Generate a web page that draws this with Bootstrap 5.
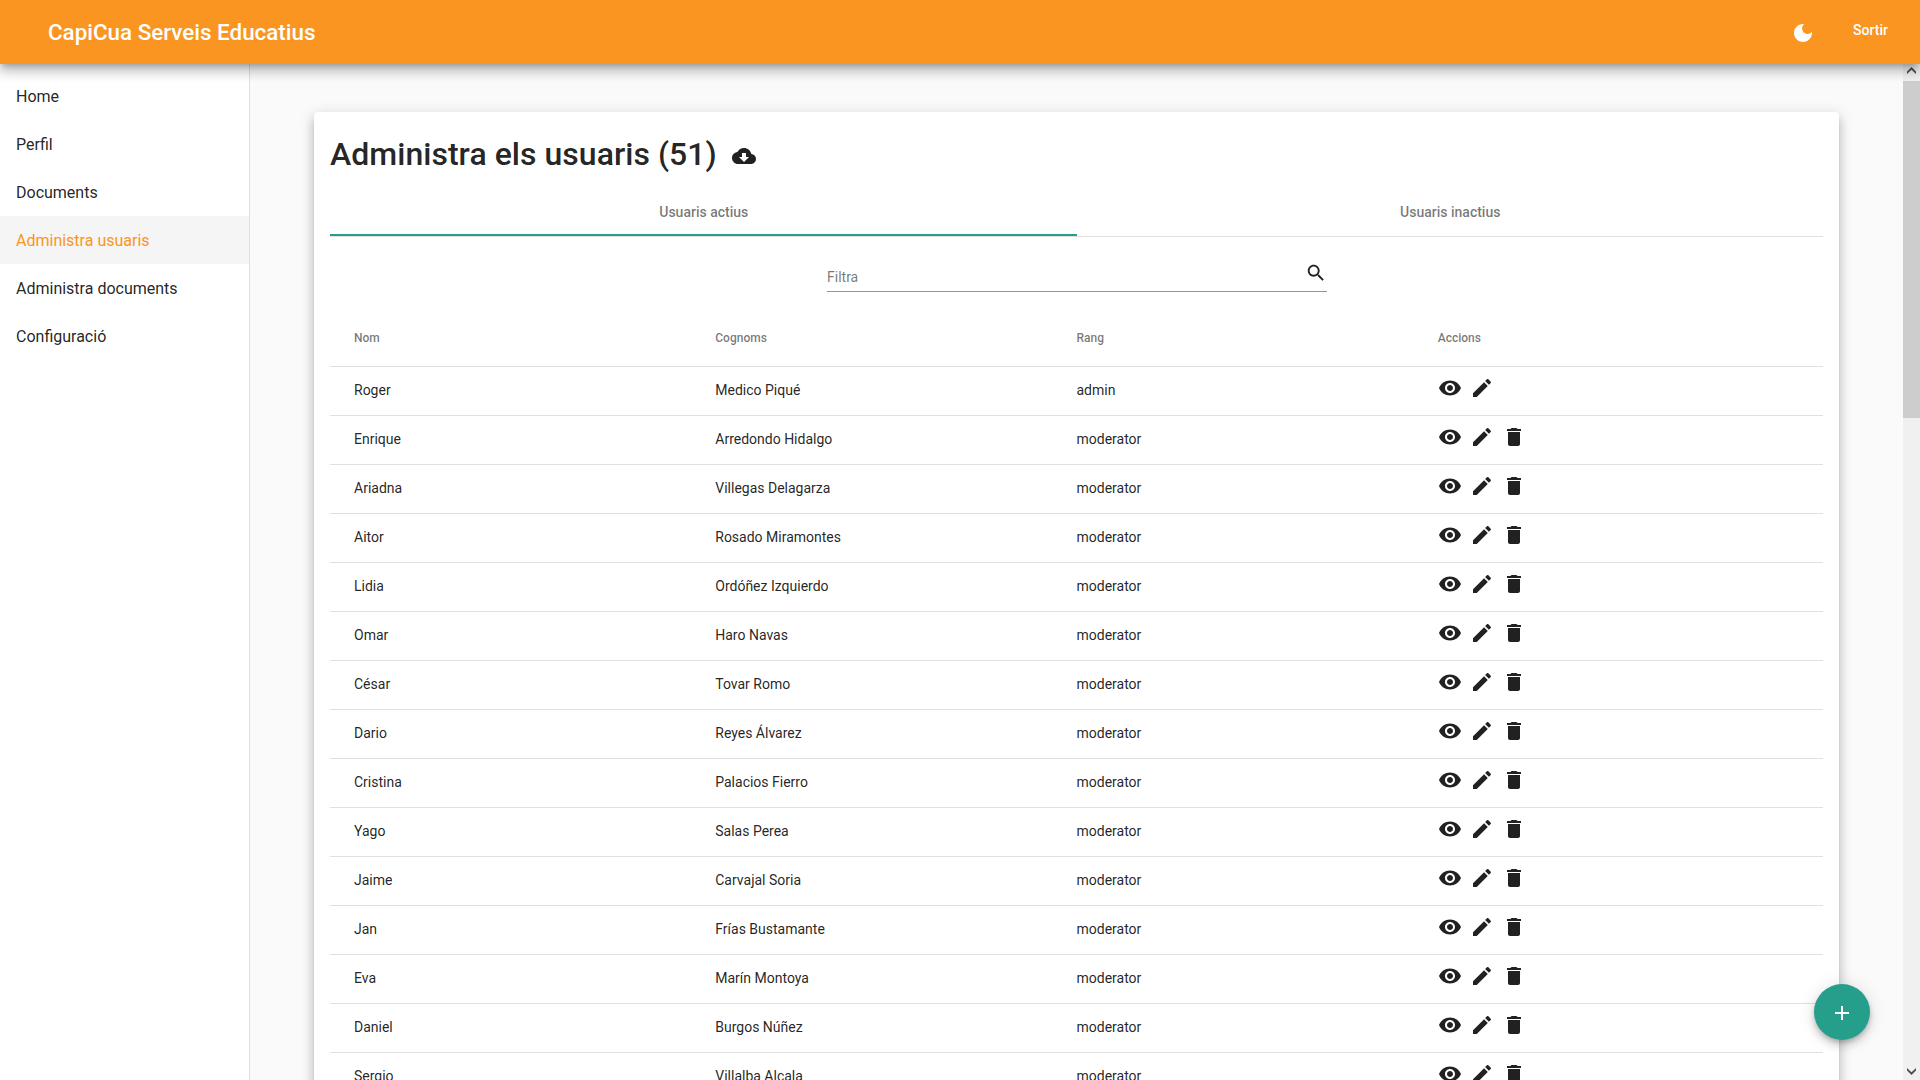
<!DOCTYPE html>
<html lang="ca">
<head>
<meta charset="utf-8">
<meta name="viewport" content="width=device-width, initial-scale=1">
<title>CapiCua Serveis Educatius</title>
<link href="https://cdn.jsdelivr.net/npm/bootstrap@5.3.0/dist/css/bootstrap.min.css" rel="stylesheet">
<style>
  body { font-family: Roboto, "Noto Sans", sans-serif; font-size: 14px; color: rgba(0,0,0,.87); background: #fafafa; }
  a { color: inherit; text-decoration: none; }
  svg { fill: currentColor; display: block; flex: none; }
  .topbar, .panel { box-shadow: 0 5px 5px -3px rgba(0,0,0,.2), 0 8px 10px 1px rgba(0,0,0,.14), 0 3px 14px 2px rgba(0,0,0,.12); }
  .topbar { height: 64px; padding: 2px 32px 0 48px; background: #fa9521; z-index: 10; }
  .brand { font-size: 22.4px; line-height: 32px; font-weight: 500; margin-bottom: 2px; }
  .logout { font-weight: 500; line-height: 36px; margin: 0 0 6px 38.500px; }
  .sidebar { width: 250px; padding-top: 8px; border-right: 1px solid rgba(0,0,0,.12); }
  .sidebar a { height: 48px; font-size: 16px; padding-top: 2px; }
  .sidebar a.active { background: #f5f5f5; color: #fa9521; }
  .content-area { padding: 48px 64px 0; }
  .panel { height: 1200px; padding: 16px; border-radius: 4px; }
  .panel h1 { font-size: 32px; line-height: 52px; font-weight: 500; letter-spacing: .03px; margin: 0 15px 0 0; }
  .export-icon { margin-top: 3px; }
  .tabs { margin-top: 8px; border-bottom: 1px solid rgba(0,0,0,.12); }
  .tabs a { height: 48px; padding: 2px 0 0 1px; font-weight: 500; color: rgba(0,0,0,.54); border-bottom: 2px solid transparent; }
  .tabs a.active { border-color: #259f8c; }
  .filter { width: 500px; height: 55px; border-bottom: 1px solid rgba(0,0,0,.42); }
  .filter input { font-size: 14px; line-height: 18px; border: 0; outline: 0; padding: 0 0 0 .5px; margin-top: 31px; background: none; }
  .filter input::placeholder { color: rgba(0,0,0,.54); opacity: 1; }
  .filter svg { margin-top: 24.500px; }
  .line { height: 49px; padding-bottom: 2px; border-bottom: 1px solid rgba(0,0,0,.12); }
  .line-head { height: 56px; margin-top: 19px; font-size: 12px; font-weight: 500; color: rgba(0,0,0,.54); }
  .fab { right: 50px; bottom: 40px; width: 56px; height: 56px; padding-top: 2px; background: #259f8c; z-index: 5;
    box-shadow: 0 3px 5px -1px rgba(0,0,0,.2), 0 6px 10px 0 rgba(0,0,0,.14), 0 1px 18px 0 rgba(0,0,0,.12); }
  .scroll-track { width: 17px; background: #f0f0f0; }
  .scroll-thumb { height: 337px; background: #cdcdcd; }
  .scroll-arrow { height: 17px; color: #505050; }
</style>
<script src="https://cdn.jsdelivr.net/npm/bootstrap@5.3.0/dist/js/bootstrap.bundle.min.js"></script>
</head>
<body class="vh-100 overflow-hidden d-flex flex-column">
<svg width="0" height="0" class="position-absolute">
  <symbol id="eye" viewBox="0 0 24 24"><path d="M12 4.500C7 4.500 2.730 7.610 1 12c1.730 4.390 6 7.500 11 7.500s9.270-3.110 11-7.500c-1.730-4.390-6-7.500-11-7.500zM12 17c-2.760 0-5-2.240-5-5s2.240-5 5-5 5 2.240 5 5-2.240 5-5 5zm0-8c-1.660 0-3 1.340-3 3s1.340 3 3 3 3-1.340 3-3-1.340-3-3-3z"/></symbol>
  <symbol id="pencil" viewBox="0 0 24 24"><path d="M3 17.250V21h3.750L17.810 9.940l-3.750-3.750L3 17.250zM20.710 7.040c.390-.390.390-1.020 0-1.410l-2.340-2.340c-.390-.390-1.020-.390-1.410 0l-1.830 1.830 3.750 3.750 1.830-1.830z"/></symbol>
  <symbol id="trash" viewBox="0 0 24 24"><path d="M6 19c0 1.100.900 2 2 2h8c1.100 0 2-.900 2-2V7H6v12zM19 4h-3.500l-1-1h-5l-1 1H5v2h14V4z"/></symbol>
</svg>

<header class="topbar position-relative d-flex align-items-center flex-shrink-0 text-white">
  <span class="brand me-auto">CapiCua Serveis Educatius</span>
  <svg width="24" height="24" viewBox="0 0 24 24"><path d="M12 3c-4.970 0-9 4.030-9 9s4.030 9 9 9 9-4.030 9-9c0-.460-.040-.920-.100-1.360-.980 1.370-2.580 2.260-4.400 2.260-2.980 0-5.400-2.420-5.400-5.400 0-1.810.890-3.420 2.260-4.400-.440-.060-.900-.100-1.360-.100z"/></svg>
  <a class="logout" href="#">Sortir</a>
</header>

<div class="d-flex flex-grow-1 overflow-hidden">
  <nav class="sidebar flex-shrink-0 bg-white">
    <a class="d-flex align-items-center px-3" href="#">Home</a>
    <a class="d-flex align-items-center px-3" href="#">Perfil</a>
    <a class="d-flex align-items-center px-3" href="#">Documents</a>
    <a class="d-flex align-items-center px-3 active" href="#">Administra usuaris</a>
    <a class="d-flex align-items-center px-3" href="#">Administra documents</a>
    <a class="d-flex align-items-center px-3" href="#">Configuració</a>
  </nav>

  <main class="content-area flex-grow-1 overflow-hidden">
    <section class="panel bg-white">
      <div class="d-flex align-items-center">
        <h1>Administra els usuaris (51)</h1>
        <svg class="export-icon" width="24" height="24" viewBox="0 0 24 24"><path d="M19.350 10.040C18.670 6.590 15.640 4 12 4 9.110 4 6.600 5.640 5.350 8.040 2.340 8.360 0 10.910 0 14c0 3.310 2.690 6 6 6h13c2.760 0 5-2.240 5-5 0-2.640-2.050-4.780-4.650-4.960zM17 13l-5 5-5-5h3V9h4v4h3z"/></svg>
      </div>
      <div class="tabs d-flex">
        <a class="w-50 d-flex align-items-center justify-content-center active" href="#">Usuaris actius</a>
        <a class="w-50 d-flex align-items-center justify-content-center" href="#">Usuaris inactius</a>
      </div>
      <div class="filter d-flex mx-auto">
        <input class="flex-grow-1 align-self-start" type="text" placeholder="Filtra">
        <svg width="22" height="22" viewBox="0 0 24 24"><path d="M15.500 14h-.790l-.280-.270C15.410 12.590 16 11.110 16 9.500 16 5.910 13.090 3 9.500 3S3 5.910 3 9.500 5.910 16 9.500 16c1.610 0 3.090-.590 4.230-1.570l.270.280v.790l5 4.990L20.490 19l-4.990-5zm-6 0C7.010 14 5 11.990 5 9.500S7.010 5 9.500 5 14 7.010 14 9.500 11.990 14 9.500 14z"/></svg>
      </div>
      <div class="line line-head d-flex align-items-center px-4">
        <div class="w-25">Nom</div><div class="w-25">Cognoms</div><div class="w-25">Rang</div><div class="w-25">Accions</div>
      </div>
      <div id="users"></div>
    </section>
  </main>

  <div class="scroll-track flex-shrink-0 d-flex flex-column">
    <div class="scroll-arrow d-flex align-items-center justify-content-center pb-1"><svg width="9" height="7" viewBox="0 0 9 7"><path d="M0 4.500 4.500 0 9 4.500V7L4.500 2.800 0 7z"/></svg></div>
    <div class="scroll-thumb"></div>
    <div class="scroll-arrow mt-auto d-flex align-items-center justify-content-center"><svg width="9" height="7" viewBox="0 0 9 7"><path d="M0 2.500 4.500 7 9 2.500V0L4.500 4.200 0 0z"/></svg></div>
  </div>
</div>

<a class="fab position-fixed rounded-circle d-flex align-items-center justify-content-center text-white" href="#">
  <svg width="24" height="24" viewBox="0 0 24 24"><path d="M19 13h-6v6h-2v-6H5v-2h6V5h2v6h6v2z"/></svg>
</a>

<script>
  const users = [
    ["Roger", "Medico Piqué", "admin"], ["Enrique", "Arredondo Hidalgo", "moderator"],
    ["Ariadna", "Villegas Delagarza", "moderator"], ["Aitor", "Rosado Miramontes", "moderator"],
    ["Lidia", "Ordóñez Izquierdo", "moderator"], ["Omar", "Haro Navas", "moderator"],
    ["César", "Tovar Romo", "moderator"], ["Dario", "Reyes Álvarez", "moderator"],
    ["Cristina", "Palacios Fierro", "moderator"], ["Yago", "Salas Perea", "moderator"],
    ["Jaime", "Carvajal Soria", "moderator"], ["Jan", "Frías Bustamante", "moderator"],
    ["Eva", "Marín Montoya", "moderator"], ["Daniel", "Burgos Núñez", "moderator"],
    ["Sergio", "Villalba Alcala", "moderator"]
  ];
  const icon = id => `<svg width="24" height="24"><use href="#${id}"/></svg>`;
  document.getElementById("users").innerHTML = users.map(([name, surname, rank]) => `
    <div class="line d-flex align-items-center px-4">
      <div class="w-25">${name}</div><div class="w-25">${surname}</div><div class="w-25">${rank}</div>
      <div class="w-25 d-flex gap-2 pb-1">${icon("eye")}${icon("pencil")}${rank === "admin" ? "" : icon("trash")}</div>
    </div>`).join("");
</script>
</body>
</html>
